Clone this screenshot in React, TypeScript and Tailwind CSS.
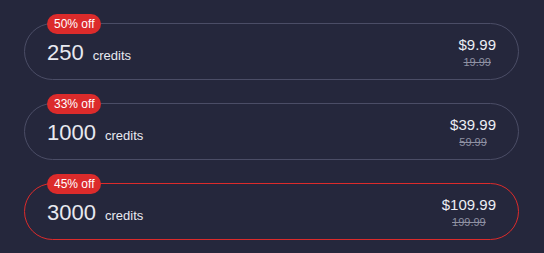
import React from 'react';

type Pack = {
  credits: string;
  off: string;
  price: string;
  was: string;
  selected?: boolean;
};

const packs: Pack[] = [
  { credits: '250', off: '50% off', price: '$9.99', was: '19.99' },
  { credits: '1000', off: '33% off', price: '$39.99', was: '59.99' },
  { credits: '3000', off: '45% off', price: '$109.99', was: '199.99', selected: true },
];

const App: React.FC = () => {
  return (
    <div
      className="min-h-screen w-full bg-[#25273c] pt-[23px] pl-6 pr-[25px] pb-4"
      style={{ fontFamily: '"Liberation Sans", Arial, sans-serif' }}
    >
      <div className="flex flex-col gap-[23px]">
        {packs.map((p) => (
          <div
            key={p.credits}
            className={
              p.selected
                ? 'relative flex h-[57px] items-center justify-between rounded-full border border-[#dc2b2b] pl-[22px] pr-[22px]'
                : 'relative flex h-[57px] items-center justify-between rounded-full border border-[#4b4d66] pl-[22px] pr-[22px]'
            }
          >
            {/* badge sits over the top border */}
            <span className="absolute -top-[10px] left-[22px] flex h-5 items-center rounded-full bg-[#dc2b2b] px-[7px] text-[12px] text-white">
              {p.off}
            </span>
            <div className="flex items-baseline gap-[9px] pt-[3px] text-[#e8e9f0]">
              <span className="text-[22px] leading-none">{p.credits}</span>
              <span className="text-[13px] leading-none">credits</span>
            </div>
            <div className="flex flex-col items-center">
              <span className="text-[15px] leading-[20px] text-[#eceef4]">{p.price}</span>
              <span className="text-[11px] leading-[14px] text-[#8f91a3] line-through">{p.was}</span>
            </div>
          </div>
        ))}
      </div>
    </div>
  );
};

export default App;
